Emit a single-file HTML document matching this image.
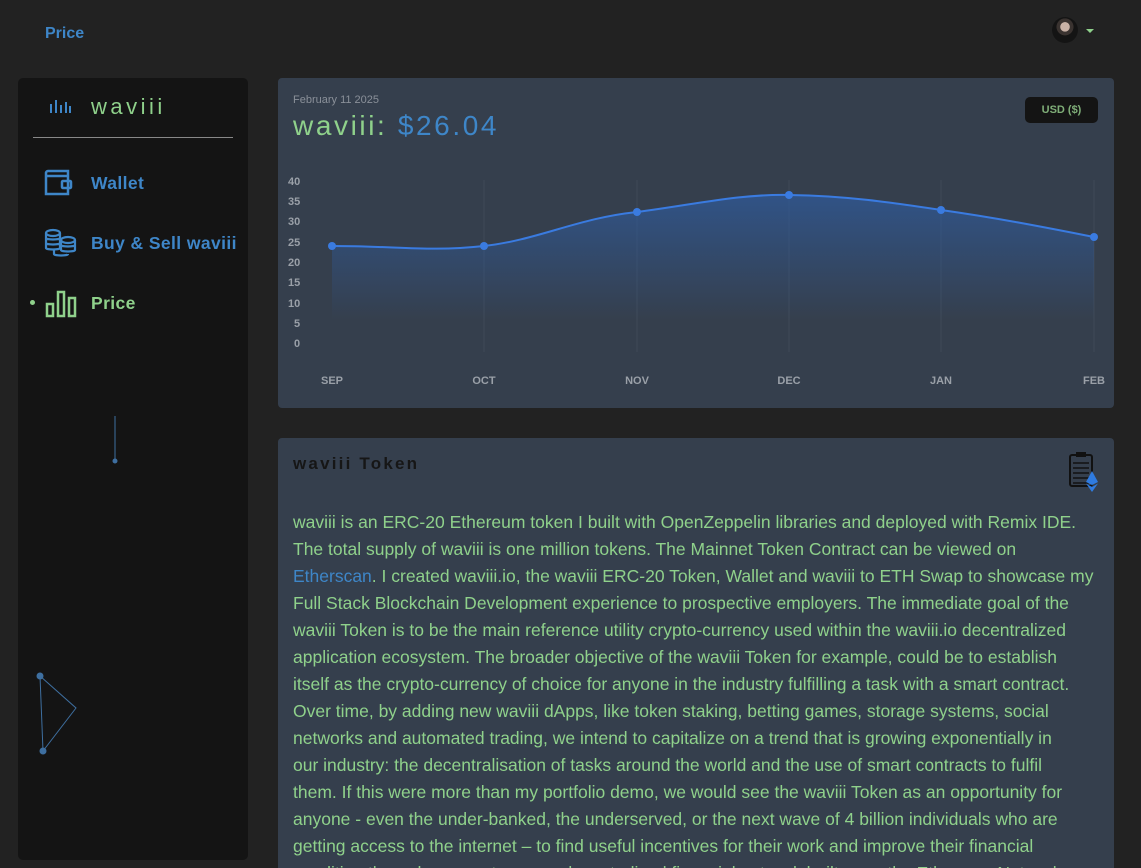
<!DOCTYPE html>
<html><head><meta charset="utf-8"><style>
*{margin:0;padding:0;box-sizing:border-box}
html,body{width:1141px;height:868px;overflow:hidden}
body{background:#222222;font-family:"Liberation Sans",sans-serif;position:relative}
.top{position:absolute;left:45px;top:25px;color:#3e86c8;font-weight:bold;font-size:16px}
.av{position:absolute;left:1052px;top:17px;width:26px;height:26px;border-radius:50%;background:radial-gradient(circle at 50% 38%,#c9b2a6 0 22%,#3a3330 24% 40%,#141414 42%)}
.caret{position:absolute;left:1086px;top:29px;border-left:4px solid transparent;border-right:4px solid transparent;border-top:4px solid #8fd18b}
.side{position:absolute;left:18px;top:78px;width:230px;height:782px;background:#141414;border-radius:5px}
.logo{position:absolute;left:91px;top:94px;color:#8fd18b;font-size:22px;letter-spacing:3.5px}
.hr{position:absolute;left:33px;top:137px;width:200px;height:1px;background:#888}
.nav{position:absolute;left:91px;font-weight:bold;font-size:17.5px;letter-spacing:.4px}
.card{position:absolute;left:278px;background:#353f4d;border-radius:4px}
.txt{position:absolute;left:293px;top:509px;width:815px;color:#8fd18b;font-size:17.5px;line-height:27px;white-space:nowrap}
.txt a{color:#3e86c8;text-decoration:none}
</style></head><body>
<div class="top">Price</div>
<div class="av"></div><div class="caret"></div>
<div class="side"></div>
<svg style="position:absolute;left:48px;top:98px" width="24" height="16"><g fill="#3e86c8"><rect x="2" y="6" width="2" height="9"/><rect x="7" y="2" width="2" height="13"/><rect x="12" y="7" width="2" height="8"/><rect x="17" y="4" width="2" height="11"/><rect x="21" y="8" width="2" height="7"/></g></svg>
<div class="logo">waviii</div>
<div class="hr"></div>
<svg style="position:absolute;left:44px;top:168px" width="32" height="30" fill="none" stroke="#3e86c8" stroke-width="2.5"><path d="M4 3h20v6M2 8h22v18H2zM2 8v-3a2 2 0 012-2"/><rect x="18" y="13" width="9" height="7" rx="1"/></svg>
<div class="nav" style="top:173px;color:#3e86c8">Wallet</div>
<svg style="position:absolute;left:44px;top:228px" width="34" height="30" fill="none" stroke="#3e86c8" stroke-width="2.2"><ellipse cx="9" cy="5" rx="7" ry="3"/><path d="M2 5v15c0 2 14 2 14 0V5M2 10c0 2 14 2 14 0M2 15c0 2 14 2 14 0"/><ellipse cx="24" cy="12" rx="7" ry="3"/><path d="M17 12v10c0 2 14 2 14 0V12M17 17c0 2 14 2 14 0"/><path d="M10 21v5c0 2 14 2 14 0"/></svg>
<div class="nav" style="top:233px;color:#3e86c8">Buy &amp; Sell waviii</div>
<div style="position:absolute;left:30px;top:300px;width:5px;height:5px;border-radius:50%;background:#8fd18b"></div>
<svg style="position:absolute;left:45px;top:290px" width="32" height="28" fill="none" stroke="#8fd18b" stroke-width="2.5"><rect x="2" y="14" width="6" height="12"/><rect x="13" y="2" width="6" height="24"/><rect x="24" y="8" width="6" height="18"/></svg>
<div class="nav" style="top:293px;color:#8fd18b">Price</div>
<svg style="position:absolute;left:30px;top:410px" width="60" height="350" stroke="#3e6fa0" fill="#3e6fa0"><path d="M10 266L46 298L13 341Z" fill="none"/><circle cx="10" cy="266" r="3"/><circle cx="13" cy="341" r="3"/></svg>
<svg style="position:absolute;left:112px;top:414px" width="6" height="50" stroke="#3e6fa0" fill="#3e6fa0"><line x1="3" y1="2" x2="3" y2="47"/><circle cx="3" cy="47" r="2"/></svg>

<div class="card" style="top:78px;width:836px;height:330px"></div>
<div style="position:absolute;left:293px;top:94px;color:#8a9099;font-size:11px">February 11 2025</div>
<div style="position:absolute;left:293px;top:110px;font-size:28px;letter-spacing:2.6px"><span style="color:#8fd18b">waviii:</span> <span style="color:#3e86c8">$26.04</span></div>
<div style="position:absolute;left:1025px;top:97px;width:73px;height:26px;background:#141414;border-radius:5px;color:#7fae78;font-weight:bold;font-size:11px;text-align:center;line-height:26px">USD ($)</div>
<svg style="position:absolute;left:278px;top:160px" width="836" height="240" font-family="Liberation Sans" font-size="11" font-weight="bold" fill="#9aa0a8">
<defs><linearGradient id="g" x1="0" y1="0" x2="0" y2="1"><stop offset="0" stop-color="#2f5a9a" stop-opacity=".75"/><stop offset="1" stop-color="#2f5a9a" stop-opacity="0"/></linearGradient></defs>
<g stroke="#3f4a58" stroke-width="1"><line x1="206" y1="20" x2="206" y2="192"/><line x1="359" y1="20" x2="359" y2="192"/><line x1="511" y1="20" x2="511" y2="192"/><line x1="663" y1="20" x2="663" y2="192"/><line x1="816" y1="20" x2="816" y2="192"/></g>
<path d="M54 86C120 86 150 92 206 86C260 80 300 58 359 52C420 44 460 34 511 35C570 36 610 42 663 50C720 58 770 68 816 77L816 160L54 160Z" fill="url(#g)"/>
<path d="M54 86C120 86 150 92 206 86C260 80 300 58 359 52C420 44 460 34 511 35C570 36 610 42 663 50C720 58 770 68 816 77" fill="none" stroke="#3a7be0" stroke-width="2"/>
<g fill="#3a7be0"><circle cx="54" cy="86" r="4"/><circle cx="206" cy="86" r="4"/><circle cx="359" cy="52" r="4"/><circle cx="511" cy="35" r="4"/><circle cx="663" cy="50" r="4"/><circle cx="816" cy="77" r="4"/></g>
<g><text x="10" y="25">40</text><text x="10" y="45">35</text><text x="10" y="65">30</text><text x="10" y="86">25</text><text x="10" y="106">20</text><text x="10" y="126">15</text><text x="10" y="147">10</text><text x="16" y="167">5</text><text x="16" y="187">0</text></g>
<g text-anchor="middle"><text x="54" y="224">SEP</text><text x="206" y="224">OCT</text><text x="359" y="224">NOV</text><text x="511" y="224">DEC</text><text x="663" y="224">JAN</text><text x="816" y="224">FEB</text></g>
</svg>

<div class="card" style="top:438px;width:836px;height:440px"></div>
<div style="position:absolute;left:293px;top:454px;color:#161616;font-size:17px;font-weight:bold;letter-spacing:2.2px">waviii Token</div>
<svg style="position:absolute;left:1068px;top:451px" width="32" height="42"><rect x="2" y="4" width="22" height="31" rx="2" fill="none" stroke="#111" stroke-width="2"/><rect x="8" y="1" width="10" height="5" fill="#111"/><g stroke="#111" stroke-width="1.5"><line x1="5" y1="12" x2="21" y2="12"/><line x1="5" y1="17" x2="21" y2="17"/><line x1="5" y1="22" x2="21" y2="22"/><line x1="5" y1="27" x2="21" y2="27"/><line x1="5" y1="32" x2="21" y2="32"/></g><path d="M24 20L30 31L24 34L18 31Z" fill="#2f7be0"/><path d="M18 32.5L24 36L30 32.5L24 41Z" fill="#2f7be0"/></svg>
<div class="txt">waviii is an ERC-20 Ethereum token I built with OpenZeppelin libraries and deployed with Remix IDE.<br>The total supply of waviii is one million tokens. The Mainnet Token Contract can be viewed on<br><a>Etherscan</a>. I created waviii.io, the waviii ERC-20 Token, Wallet and waviii to ETH Swap to showcase my<br>Full Stack Blockchain Development experience to prospective employers. The immediate goal of the<br>waviii Token is to be the main reference utility crypto-currency used within the waviii.io decentralized<br>application ecosystem. The broader objective of the waviii Token for example, could be to establish<br>itself as the crypto-currency of choice for anyone in the industry fulfilling a task with a smart contract.<br>Over time, by adding new waviii dApps, like token staking, betting games, storage systems, social<br>networks and automated trading, we intend to capitalize on a trend that is growing exponentially in<br>our industry: the decentralisation of tasks around the world and the use of smart contracts to fulfil<br>them. If this were more than my portfolio demo, we would see the waviii Token as an opportunity for<br>anyone - even the under-banked, the underserved, or the next wave of 4 billion individuals who are<br>getting access to the internet – to find useful incentives for their work and improve their financial<br>condition through access to a new decentralized financial network built upon the Ethereum Network.</div>
</body></html>
